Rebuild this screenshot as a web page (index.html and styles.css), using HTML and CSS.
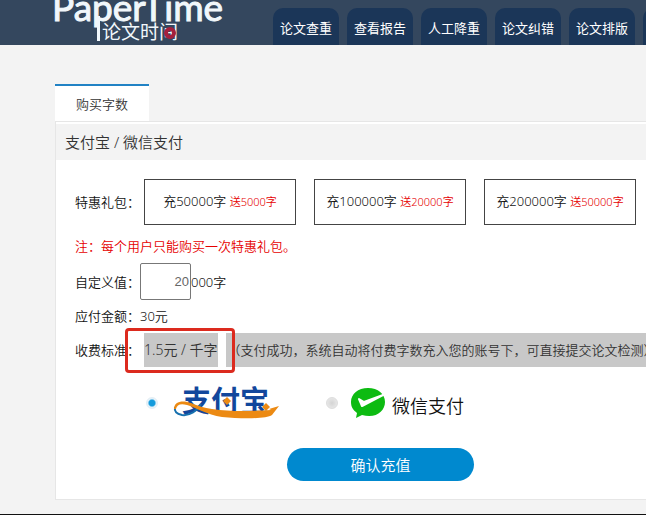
FILE: index.html
```html
<!DOCTYPE html>
<html lang="zh-CN">

<head>
    <meta charset="UTF-8">
    <meta name="viewport" content="width=device-width, initial-scale=1.0">
    <title>购买字数</title>
    <link rel="stylesheet" href="styles.css">
</head>

<body>
    <header class="header">
        <a class="logo" href="#">
            <svg width="180" height="45" viewBox="0 0 180 45" role="img" aria-label="PaperTime 论文时间">
                <text class="logo-en" x="-2" y="21">PaperTime</text>
                <rect x="43" y="16" width="3" height="25" fill="#f1f7fb" />
                <text class="logo-cn" x="48" y="39">论文时间</text>
                <circle cx="116" cy="33" r="4" fill="none" stroke="#a5203c" stroke-width="4" />
            </svg>
        </a>
        <nav class="navigation">
            <a href="#">论文查重</a>
            <a href="#">查看报告</a>
            <a href="#">人工降重</a>
            <a href="#">论文纠错</a>
            <a href="#">论文排版</a>
            <a href="#" aria-label="更多"></a>
        </nav>
    </header>

    <main class="container">
        <a class="tab" href="#">购买字数</a>
        <section class="panel">
            <h2 class="panel-title">支付宝 / 微信支付</h2>
            <form class="pay-form">
                <div class="row packages">
                    <span class="label">特惠礼包：</span>
                    <button type="button" class="package">充50000字 <small>送5000字</small></button>
                    <button type="button" class="package">充100000字 <small>送20000字</small></button>
                    <button type="button" class="package">充200000字 <small>送50000字</small></button>
                </div>
                <p class="row note">注：每个用户只能购买一次特惠礼包。</p>
                <div class="row custom">
                    <label class="label" for="words">自定义值：</label>
                    <input type="text" id="words" class="words" value="20">
                    <span>000字</span>
                </div>
                <div class="row">
                    <span class="label">应付金额：</span>
                    <span>30元</span>
                </div>
                <div class="row fee">
                    <span class="label">收费标准：</span>
                    <span class="selected price">1.5元 / 千字</span>
                    <span class="selected tip">（支付成功，系统自动将付费字数充入您的账号下，可直接提交论文检测）</span>
                    <span class="mark"></span>
                </div>
                <div class="methods">
                    <label class="method">
                        <input type="radio" name="pay" value="alipay" checked>
                        <svg width="108" height="36" viewBox="0 0 108 36" role="img" aria-label="支付宝">
                            <text class="alipay-text" x="10" y="27">支付宝</text>
                            <path d="M29 19C25 26 18 31 10 30C5 29 2 27 3 22" fill="none" stroke="#1670ae" stroke-width="2" />
                            <path d="M2 24C2 16 11 15 19 18C26 21 32 23 40 24C60 27 80 26 99 25L97 24L107 21L100 30C94 34 70 34 50 32C35 30 23 22 15 20C8 18 5 20 4 24Z" fill="#ec8a13" />
                            <path d="M55 12L59 16L55 20L51 16ZM94 18L98 22L94 26L90 22Z" fill="#ec8a13" />
                        </svg>
                    </label>
                    <label class="method">
                        <input type="radio" name="pay" value="wechat">
                        <svg width="36" height="32" viewBox="0 0 36 32" aria-hidden="true">
                            <path d="M18 1C8 1 1 7 1 15C1 20 3 23 7 26L6 31L12 28C26 32 35 24 35 15C35 7 28 1 18 1Z" fill="#0dbb12" />
                            <path d="M9 12L12 19L33 8L14 15Z" fill="#fff" stroke="#fff" stroke-width="2" stroke-linejoin="round" />
                        </svg>
                        <span class="wechat-text">微信支付</span>
                    </label>
                </div>
                <button type="submit" class="submit">确认充值</button>
            </form>
        </section>
    </main>
    <footer class="footer"></footer>
</body>

</html>
```
FILE: styles.css
```css
* {
    box-sizing: border-box;
}

body {
    margin: 0;
    min-height: 100vh;
    display: flex;
    flex-direction: column;
    background-color: #f3f3f3;
    color: #111;
    font-family: "Noto Sans", "Noto Sans CJK SC", sans-serif;
    font-size: 13px;
    font-weight: 350;
    line-height: 20px;
    overflow-x: hidden;
}

a {
    color: inherit;
    text-decoration: none;
}

.header {
    display: flex;
    height: 45px;
    padding-left: 54px;
    background-color: #34475e;
    overflow: hidden;
}

.logo {
    flex: none;
    width: 219px;
}

.logo-en {
    font-family: Lato, sans-serif;
    font-size: 37px;
    font-weight: 400;
    fill: #f1f7fb;
    stroke: #f1f7fb;
    stroke-width: 1px;
}

.logo-cn {
    font-size: 19px;
    font-weight: 400;
    fill: #f1f7fb;
}

.navigation {
    display: flex;
    gap: 8px;
    padding-top: 8px;
}

.navigation a {
    flex: none;
    width: 66px;
    padding-top: 10px;
    border-radius: 10px 10px 0 0;
    background-color: #1b3658;
    color: #fff;
    font-weight: 400;
    text-align: center;
}

.container {
    flex: 1;
    padding: 39px 0 14px 55px;
    overflow: hidden;
}

.tab {
    display: block;
    width: 94px;
    height: 37px;
    padding-top: 8px;
    border-top: 2px solid #2182c4;
    background-color: #fff;
    text-align: center;
    color: #333;
}

.panel {
    border: 1px solid #e6e6e6;
    border-right: 0;
    background-color: #fff;
}

.panel-title {
    margin: 2px 0 0;
    padding: 8px 9px;
    background-color: #f3f3f3;
    font-size: 15px;
    font-weight: 350;
    color: #333;
}

.pay-form {
    padding: 19px 0 18px 19px;
}

.row {
    display: flex;
    align-items: center;
    margin: 0;
    white-space: nowrap;
}

.label {
    flex: none;
    width: 65px;
}

.packages {
    gap: 18px;
}

.packages .label {
    margin-right: -14px;
}

.package {
    flex: none;
    width: 152px;
    height: 46px;
    padding: 0 0 2px;
    border: 1px solid #444;
    background-color: #fff;
    color: inherit;
    font: inherit;
}

.package small {
    font-size: 11px;
    color: #e60000;
}

.note {
    padding: 11px 0 7px;
    color: #e60000;
}

.words {
    width: 51px;
    height: 37px;
    padding: 0 1px;
    border: 1px solid #777;
    border-radius: 2px;
    background-color: #fff;
    color: #666;
    font-family: "Liberation Sans", sans-serif;
    font-size: 13px;
    text-align: right;
}

.custom {
    margin-bottom: 6px;
}

.fee {
    position: relative;
    margin-top: 7px;
}

.selected {
    padding: 7px 0;
    background-color: #c8c8c8;
    color: #333;
}

.price {
    margin: 0 8px 0 4px;
    font-size: 14px;
}

.tip {
    padding-left: 2px;
}

/* red frame over the price */
.mark {
    position: absolute;
    top: -5px;
    left: 50px;
    width: 110px;
    height: 45px;
    border: 3px solid #dc2a1e;
    border-radius: 4px;
}

.methods {
    display: flex;
    gap: 46px;
    padding: 18px 0 0 71px;
}

.method {
    display: flex;
    align-items: center;
}

.method input {
    appearance: none;
    width: 12px;
    height: 12px;
    margin: 0 14px 0 0;
    border: 1px solid #ddd;
    border-radius: 50%;
    background: radial-gradient(#d4d4d4, #eee);
}

.method input:checked {
    border-color: #e4eef4;
    background: radial-gradient(#159bdc 40%, #e4f2fa 60%);
}

.method + .method input {
    margin-right: 12px;
}

.alipay-text {
    font-size: 29px;
    font-weight: 700;
    fill: #12479c;
}

.wechat-text {
    margin-left: 6px;
    padding-top: 6px;
    font-size: 18px;
}

.submit {
    display: block;
    width: 187px;
    height: 33px;
    margin: 27px 0 0 212px;
    padding: 0;
    border: 0;
    border-radius: 17px;
    background-color: #0089cf;
    color: #fff;
    font: inherit;
    font-size: 15px;
}

.footer {
    height: 1px;
    background-color: #111;
}
```
